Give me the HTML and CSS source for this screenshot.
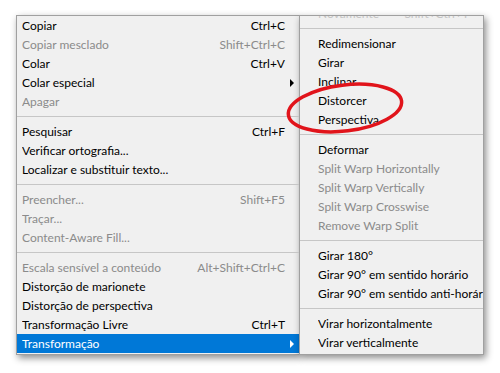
FILE: index.html
```html
<!DOCTYPE html>
<html lang="pt">
<head>
<meta charset="utf-8">
<title>Editar - Transformação</title>
<meta name="viewport" content="width=device-width, initial-scale=1">
<link rel="stylesheet" href="styles.css">
</head>
<body>
  <div class="menus">
    <ul class="menu main">
      <li class="item"><span class="label">Copiar</span><span class="key">Ctrl+C</span><span class="sub"></span></li>
      <li class="item off"><span class="label">Copiar mesclado</span><span class="key">Shift+Ctrl+C</span><span class="sub"></span></li>
      <li class="item"><span class="label">Colar</span><span class="key">Ctrl+V</span><span class="sub"></span></li>
      <li class="item"><span class="label">Colar especial</span><span class="key"></span><span class="sub"><i class="arrow"></i></span></li>
      <li class="item off"><span class="label">Apagar</span><span class="key"></span><span class="sub"></span></li>
      <li class="sep"></li>
      <li class="item"><span class="label">Pesquisar</span><span class="key">Ctrl+F</span><span class="sub"></span></li>
      <li class="item"><span class="label">Verificar ortografia...</span><span class="key"></span><span class="sub"></span></li>
      <li class="item"><span class="label">Localizar e substituir texto...</span><span class="key"></span><span class="sub"></span></li>
      <li class="sep"></li>
      <li class="item off"><span class="label">Preencher...</span><span class="key">Shift+F5</span><span class="sub"></span></li>
      <li class="item off"><span class="label">Traçar...</span><span class="key"></span><span class="sub"></span></li>
      <li class="item off"><span class="label">Content-Aware Fill...</span><span class="key"></span><span class="sub"></span></li>
      <li class="sep"></li>
      <li class="item off"><span class="label">Escala sensível a conteúdo</span><span class="key">Alt+Shift+Ctrl+C</span><span class="sub"></span></li>
      <li class="item"><span class="label">Distorção de marionete</span><span class="key"></span><span class="sub"></span></li>
      <li class="item"><span class="label">Distorção de perspectiva</span><span class="key"></span><span class="sub"></span></li>
      <li class="item"><span class="label">Transformação Livre</span><span class="key">Ctrl+T</span><span class="sub"></span></li>
      <li class="item active"><span class="label">Transformação</span><span class="key"></span><span class="sub"><i class="arrow"></i></span></li>
    </ul>

    <ul class="menu flyout">
      <li class="item ghost"><span class="label">Novamente</span><span class="key">Shift+Ctrl+T</span></li>
      <li class="sep"></li>
      <li class="item"><span class="label">Redimensionar</span></li>
      <li class="item"><span class="label">Girar</span></li>
      <li class="item"><span class="label">Inclinar</span></li>
      <li class="item"><span class="label">Distorcer</span></li>
      <li class="item"><span class="label">Perspectiva</span></li>
      <li class="sep"></li>
      <li class="item"><span class="label">Deformar</span></li>
      <li class="item off"><span class="label">Split Warp Horizontally</span></li>
      <li class="item off"><span class="label">Split Warp Vertically</span></li>
      <li class="item off"><span class="label">Split Warp Crosswise</span></li>
      <li class="item off"><span class="label">Remove Warp Split</span></li>
      <li class="sep"></li>
      <li class="item"><span class="label">Girar 180°</span></li>
      <li class="item"><span class="label">Girar 90° em sentido horário</span></li>
      <li class="item"><span class="label">Girar 90° em sentido anti-horário</span></li>
      <li class="sep"></li>
      <li class="item"><span class="label">Virar horizontalmente</span></li>
      <li class="item"><span class="label">Virar verticalmente</span></li>
    </ul>
  </div>

  <!-- marcação à mão por cima do submenu -->
  <svg class="mark" width="500" height="373" viewBox="0 0 500 373">
    <ellipse cx="345" cy="108" rx="57" ry="23" transform="rotate(-7 345 108)" fill="none" stroke="#e1141b" stroke-width="3.5"/>
  </svg>
</body>
</html>
```

FILE: styles.css
```css
html, body { margin: 0; padding: 0; background: #fff; }

body {
    width: 500px;
    height: 373px;
    overflow: hidden;
    position: relative;
    font-family: Lato, "Noto Sans", sans-serif;
    font-size: 12px;
    color: #000;
}

.menus {
    display: flex;
    align-items: flex-start;
    padding: 15px 0 0 16px;
}

.menu {
    list-style: none;
    margin: 0;
    padding: 0;
    background: #f0f0f0;
    border: 1px solid #a0a0a0;
    box-shadow: 2px 3px 7px rgba(0, 0, 0, 0.45);
    overflow: hidden;
}

.main {
    width: 282px;
    border-right: none;
    padding-bottom: 1px;
}

.flyout {
    width: 183px;
    padding-bottom: 2px;
}

.item {
    display: flex;
    align-items: center;
    height: 19px;
    line-height: 19px;
    white-space: nowrap;
}

.main .item { padding-left: 5px; }
.flyout .item { padding-left: 18px; }

.label { flex: 1; overflow: hidden; }

.key { text-align: right; }

.sub {
    width: 14px;
    display: flex;
    justify-content: center;
    align-items: center;
}

.arrow {
    display: block;
    width: 0;
    height: 0;
    border-top: 4px solid transparent;
    border-bottom: 4px solid transparent;
    border-left: 4px solid #000;
}

.off { color: #8b8b8b; }

.ghost {
    margin-top: -12px;
    color: #c4c4c4;
    padding-right: 14px;
}

.active { background: #0078d7; color: #fff; }
.active .arrow { border-left-color: #fff; }

.sep {
    height: 11px;
    position: relative;
}
.sep::after {
    content: "";
    position: absolute;
    left: 0;
    right: 0;
    top: 5px;
    border-top: 1px solid #c6c6c6;
}

.mark {
    position: absolute;
    left: 0;
    top: 0;
    pointer-events: none;
}
```
